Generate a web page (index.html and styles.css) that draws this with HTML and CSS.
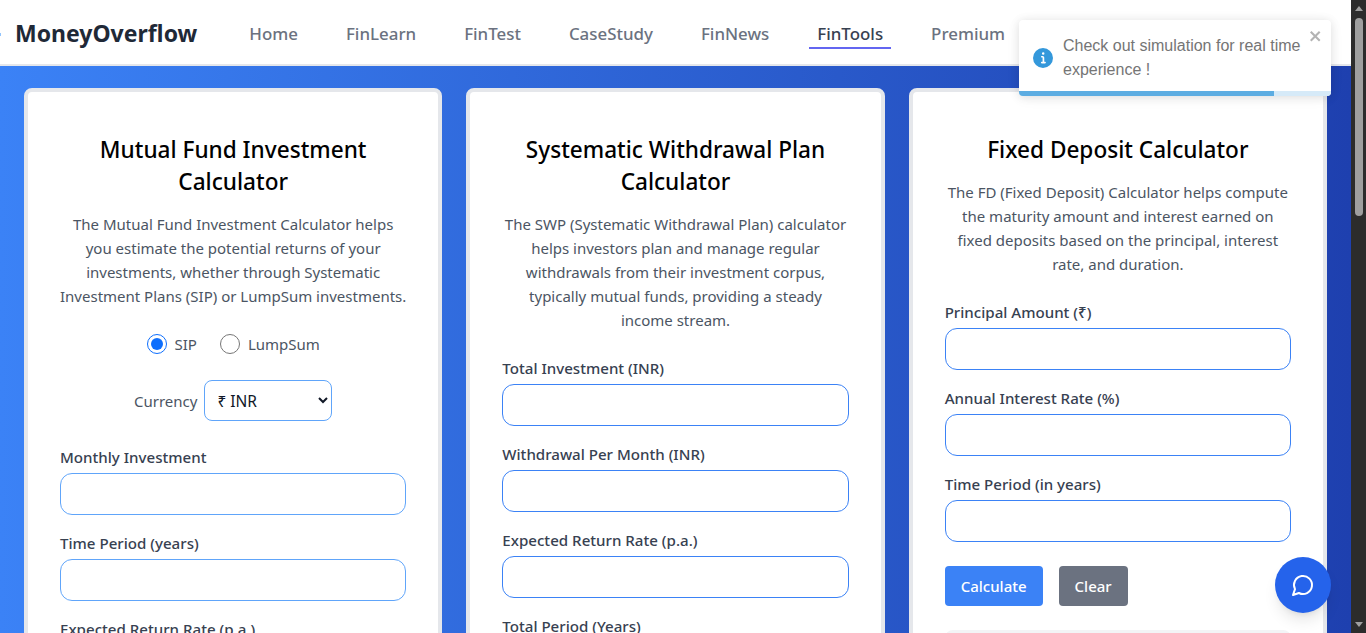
FILE: index.html
```html
<!DOCTYPE html>
<html lang="en">
<head>
    <meta charset="UTF-8">
    <meta name="viewport" content="width=device-width, initial-scale=1.0">
    <title>MoneyOverflow</title>
    <link rel="stylesheet" href="styles.css">
</head>
<body>
    <div class="window">
        <div class="page">
            <nav class="navbar">
                <span class="logo-edge"></span>
                <span class="brand">MoneyOverflow</span>
                <div class="nav-links">
                    <a class="nav-link">Home</a>
                    <a class="nav-link">FinLearn</a>
                    <a class="nav-link">FinTest</a>
                    <a class="nav-link">CaseStudy</a>
                    <a class="nav-link">FinNews</a>
                    <a class="nav-link active">FinTools</a>
                    <a class="nav-link">Premium</a>
                </div>
            </nav>

            <main class="calculators">
                <section class="card">
                    <h2>Mutual Fund Investment Calculator</h2>
                    <p class="intro">The Mutual Fund Investment Calculator helps you estimate the potential returns of your investments, whether through Systematic Investment Plans (SIP) or LumpSum investments.</p>
                    <div class="radio-row">
                        <label class="radio"><input type="radio" name="mode" checked> SIP</label>
                        <label class="radio"><input type="radio" name="mode"> LumpSum</label>
                    </div>
                    <div class="currency-row">
                        <label for="currency">Currency</label>
                        <select id="currency">
                            <option>₹ INR</option>
                        </select>
                    </div>
                    <div class="form-group">
                        <label>Monthly Investment</label>
                        <input type="text">
                    </div>
                    <div class="form-group">
                        <label>Time Period (years)</label>
                        <input type="text">
                    </div>
                    <div class="form-group">
                        <label>Expected Return Rate (p.a.)</label>
                        <input type="text">
                    </div>
                </section>

                <section class="card card-strong">
                    <h2>Systematic Withdrawal Plan Calculator</h2>
                    <p class="intro">The SWP (Systematic Withdrawal Plan) calculator helps investors plan and manage regular withdrawals from their investment corpus, typically mutual funds, providing a steady income stream.</p>
                    <div class="form-group">
                        <label>Total Investment (INR)</label>
                        <input type="text">
                    </div>
                    <div class="form-group">
                        <label>Withdrawal Per Month (INR)</label>
                        <input type="text">
                    </div>
                    <div class="form-group">
                        <label>Expected Return Rate (p.a.)</label>
                        <input type="text">
                    </div>
                    <div class="form-group">
                        <label>Total Period (Years)</label>
                        <input type="text">
                    </div>
                </section>

                <section class="card card-strong">
                    <h2>Fixed Deposit Calculator</h2>
                    <p class="intro">The FD (Fixed Deposit) Calculator helps compute the maturity amount and interest earned on fixed deposits based on the principal, interest rate, and duration.</p>
                    <div class="form-group">
                        <label>Principal Amount (₹)</label>
                        <input type="text">
                    </div>
                    <div class="form-group">
                        <label>Annual Interest Rate (%)</label>
                        <input type="text">
                    </div>
                    <div class="form-group">
                        <label>Time Period (in years)</label>
                        <input type="text">
                    </div>
                    <div class="actions">
                        <button class="btn btn-primary">Calculate</button>
                        <button class="btn btn-secondary">Clear</button>
                    </div>
                    <div class="result"></div>
                </section>
            </main>

            <div class="toast">
                <svg class="toast-icon" viewBox="0 0 24 24"><path d="M12 0a12 12 0 1012 12A12.013 12.013 0 0012 0zm.25 5a1.5 1.5 0 11-1.5 1.5 1.5 1.5 0 011.5-1.5zm2.25 13.5h-4a1 1 0 010-2h.75a.25.25 0 00.25-.25v-4.5a.25.25 0 00-.25-.25h-.75a1 1 0 010-2h1a2 2 0 012 2v4.75a.25.25 0 00.25.25h.75a1 1 0 110 2z"/></svg>
                <span class="toast-text">Check out simulation for real time experience !</span>
                <svg class="toast-close" viewBox="0 0 14 16"><path d="M7.71 8.23l3.75 3.75-1.48 1.48-3.75-3.75-3.75 3.75L1 11.98l3.75-3.75L1 4.48 2.48 3l3.75 3.75L9.98 3l1.48 1.48-3.75 3.75z"/></svg>
                <div class="toast-progress"><div class="toast-progress-fill"></div></div>
            </div>

            <button class="chat-button">
                <svg viewBox="0 0 24 24"><path d="M7.9 20A9 9 0 1 0 4 16.1L2 22Z"/></svg>
            </button>
        </div>

        <div class="scrollbar">
            <span class="arrow-up"></span>
            <div class="scroll-track"><div class="scroll-thumb"></div></div>
            <span class="arrow-down"></span>
        </div>
    </div>
</body>
</html>
```

FILE: styles.css
```css
* {
    box-sizing: border-box;
}

html, body {
    margin: 0;
    padding: 0;
    height: 100%;
    overflow: hidden;
}

body {
    font-family: 'Noto Sans', sans-serif;
    font-size: 15px;
    color: #1f2937;
}

.window {
    display: flex;
    height: 633px;
}

.page {
    position: relative;
    flex: 1;
    min-width: 0;
    overflow: hidden;
    background: linear-gradient(to right, #3b82f6, #1e40af);
}

.navbar {
    position: relative;
    display: flex;
    align-items: center;
    height: 66px;
    padding: 0 15px;
    background-color: white;
    border-bottom: 2px solid #e5e7eb;
}

.logo-edge {
    position: absolute;
    left: 0;
    top: 33px;
    width: 1px;
    height: 3px;
    background-color: #93c5fd;
}

.brand {
    padding-top: 2px;
    font-size: 23px;
    font-weight: 700;
    color: #1f2937;
    margin-right: 44px;
}

.nav-links {
    display: flex;
    gap: 32px;
}

.nav-link {
    padding: 6px 8px 2px;
    font-size: 16.9px;
    font-weight: 500;
    color: #6b7280;
    border-bottom: 2px solid transparent;
}

.nav-link.active {
    color: #374151;
    border-bottom-color: #6366f1;
}

.calculators {
    display: grid;
    grid-template-columns: repeat(3, 1fr);
    gap: 24px;
    padding: 22px 24px;
    align-items: start;
}

.card {
    padding: 42px 32px 32px;
    background-color: white;
    border: 4px solid #e5e7eb;
    border-radius: 8px;
}

h2 {
    margin: 0 0 14px;
    font-size: 22.6px;
    line-height: 32px;
    font-weight: 500;
    color: black;
    text-align: center;
}

.intro {
    margin: 0 0 24px;
    line-height: 24px;
    color: #4b5563;
    text-align: center;
}

.radio-row {
    display: flex;
    justify-content: center;
    gap: 23px;
    margin-bottom: 24px;
}

.radio {
    display: flex;
    align-items: center;
    gap: 8px;
    color: #4b5563;
    line-height: 24px;
}

.radio input {
    width: 20px;
    height: 20px;
    margin: 0;
    accent-color: #0d6efd;
}

.currency-row {
    display: flex;
    justify-content: center;
    align-items: center;
    gap: 7px;
    margin-bottom: 24px;
    color: #4b5563;
}

select {
    width: 128px;
    height: 41px;
    padding: 0 8px;
    font-family: inherit;
    font-size: 15.5px;
    color: #111827;
    background-color: white;
    border: 1px solid #60a5fa;
    border-radius: 8px;
}

.form-group {
    margin-bottom: 16px;
}

.form-group label {
    display: block;
    margin-bottom: 4px;
    font-size: 15.1px;
    font-weight: 500;
    line-height: 24px;
    color: #374151;
}

.form-group input {
    display: block;
    width: 100%;
    height: 42px;
    border: 1px solid #60a5fa;
    border-radius: 12px;
    background-color: white;
}

.card-strong .form-group input {
    border-color: #3b82f6;
}

.actions {
    display: flex;
    gap: 16px;
    margin-top: 24px;
}

.btn {
    height: 40px;
    padding: 0 16px;
    font-family: inherit;
    font-size: 15px;
    font-weight: 500;
    color: white;
    border: none;
    border-radius: 4px;
}

.btn-primary {
    background-color: #3b82f6;
}

.btn-secondary {
    background-color: #6b7280;
}

.result {
    height: 120px;
    margin-top: 24px;
    background-color: #f3f4f6;
    border-radius: 8px;
}

.toast {
    position: absolute;
    top: 20px;
    left: 1019px;
    display: flex;
    align-items: center;
    width: 312px;
    height: 76px;
    padding: 0 14px 1px;
    background-color: white;
    border-radius: 4px;
    box-shadow: 0 1px 10px rgba(0, 0, 0, 0.1), 0 2px 15px rgba(0, 0, 0, 0.05);
    overflow: hidden;
    font-family: 'Liberation Sans', Arial, sans-serif;
}

.toast-icon {
    flex: none;
    width: 20px;
    height: 20px;
    margin-right: 10px;
    fill: #3498db;
}

.toast-text {
    width: 250px;
    font-size: 16px;
    line-height: 24px;
    color: #757575;
}

.toast-close {
    position: absolute;
    top: 8px;
    right: 8px;
    width: 14px;
    height: 16px;
    fill: #b3b3b3;
}

.toast-progress {
    position: absolute;
    left: 0;
    right: 0;
    bottom: 0;
    height: 5px;
    background-color: #d6eaf8;
}

.toast-progress-fill {
    width: 255px;
    height: 100%;
    background-color: #5dade2;
}

.chat-button {
    position: absolute;
    left: 1275px;
    top: 557px;
    display: flex;
    align-items: center;
    justify-content: center;
    width: 56px;
    height: 56px;
    padding: 0;
    background-color: #2563eb;
    border: none;
    border-radius: 50%;
    box-shadow: 0 10px 15px -3px rgba(0, 0, 0, 0.1), 0 4px 6px -4px rgba(0, 0, 0, 0.1);
}

.chat-button svg {
    width: 24px;
    height: 24px;
    fill: none;
    stroke: white;
    stroke-width: 2;
    stroke-linecap: round;
    stroke-linejoin: round;
}

.scrollbar {
    display: flex;
    flex-direction: column;
    align-items: center;
    flex: none;
    width: 15px;
    padding: 6px 0;
    background-color: #2c2c2c;
}

.arrow-up {
    border-left: 4px solid transparent;
    border-right: 4px solid transparent;
    border-bottom: 5px solid #9f9f9f;
}

.arrow-down {
    border-left: 4px solid transparent;
    border-right: 4px solid transparent;
    border-top: 5px solid #9f9f9f;
}

.scroll-track {
    flex: 1;
    padding-top: 7px;
}

.scroll-thumb {
    width: 8px;
    height: 198px;
    background-color: #9f9f9f;
    border-radius: 4px;
}
```
